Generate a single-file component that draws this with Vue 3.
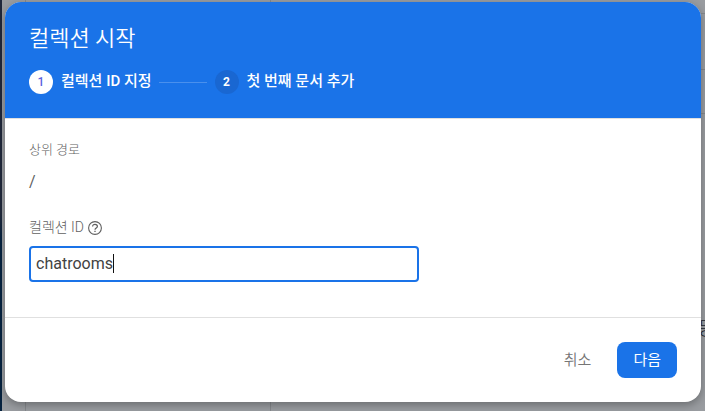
<script setup>
import { ref } from 'vue'

const steps = ['컬렉션 ID 지정', '첫 번째 문서 추가']
const current = ref(0)
const collectionId = ref('chatrooms')
</script>

<template>
  <div class="page">
    <div class="backdrop" aria-hidden="true">
      <div class="rail"></div>
      <div class="panel"></div>
      <div class="panel wide"></div>
      <div class="side">
        <div class="side-row"></div>
        <div class="side-row"></div>
        <div class="side-row"></div>
        <span class="side-text">등</span>
      </div>
    </div>

    <form class="dialog" role="dialog" aria-labelledby="dialog-title" @submit.prevent="current = 1">
      <header class="head">
        <h1 id="dialog-title" class="title">컬렉션 시작</h1>
        <ol class="steps">
          <li v-for="(step, i) in steps" :key="step" class="step">
            <span class="badge" :class="{ active: i === current }">{{ i + 1 }}</span>
            <span class="step-label">{{ step }}</span>
          </li>
        </ol>
      </header>

      <main class="body">
        <div class="label">상위 경로</div>
        <div class="path">/</div>
        <div class="label id-label">
          <label for="collection-id">컬렉션 ID</label>
          <svg class="help" viewBox="0 0 14 14" fill="none" stroke="currentColor" aria-hidden="true">
            <circle cx="7" cy="7" r="6.4" stroke-width="1.1" />
            <path d="M4.6 5.5c0-1.3 1-2.2 2.4-2.2s2.4.9 2.4 2.1c0 1.6-2.4 1.7-2.4 3.4" stroke-width="1.2" />
            <path d="M7 9.8v1.3" stroke-width="1.3" />
          </svg>
        </div>
        <div class="field">
          <input id="collection-id" v-model="collectionId" class="input" type="text" autocomplete="off" spellcheck="false" />
          <span class="caret" aria-hidden="true">{{ collectionId }}</span>
        </div>
      </main>

      <footer class="foot">
        <button type="button" class="btn cancel">취소</button>
        <button type="submit" class="btn next">다음</button>
      </footer>
    </form>
  </div>
</template>

<style>
body {
  margin: 0;
}
</style>

<style scoped>
.page {
  position: relative;
  box-sizing: border-box;
  min-height: 100vh;
  padding: 2px 4px 9px 5px;
  overflow: hidden;
  font-family: Roboto, 'Noto Sans CJK KR', sans-serif;
  background: #999ca0;
}

.backdrop {
  position: absolute;
  inset: 0;
  display: flex;
}

.rail {
  width: 2px;
  background: linear-gradient(#20283a 0 52%, #06223f 58%);
}

.panel {
  box-sizing: border-box;
  width: 24px;
  border-right: 1px solid #85888c;
}

.panel.wide {
  width: 245px;
}

.side {
  width: 7px;
  margin-left: auto;
  overflow: hidden;
}

.side-row {
  box-sizing: border-box;
  height: 56px;
  border-bottom: 1px solid #85888c;
}

.side-row:first-child {
  height: 14px;
}

.side-row:nth-child(3) {
  height: 44px;
}

.side-text {
  display: block;
  margin-top: 205px;
  font-size: 18px;
  font-weight: 300;
  line-height: 20px;
  color: #202530;
}

.dialog {
  position: relative;
  border-radius: 16px;
  overflow: hidden;
  background: #fff;
  box-shadow: 0 3px 8px rgba(0, 0, 0, 0.3);
}

.head {
  box-sizing: border-box;
  padding: 21px 24px 24px;
  border-bottom: 1px solid #e0e0e0;
  color: #fff;
  background: #1a73e8;
}

.title {
  margin: 0;
  font-size: 22px;
  font-weight: 350;
  line-height: 32px;
}

.steps {
  display: flex;
  align-items: center;
  margin: 15px 0 0;
  padding: 0;
  list-style: none;
}

.step {
  display: flex;
  align-items: center;
  gap: 8px;
}

.step + .step::before {
  content: '';
  width: 48px;
  height: 1px;
  margin-left: 7px;
  background: #4a90ed;
}

.badge {
  display: grid;
  place-items: center;
  width: 24px;
  height: 24px;
  border-radius: 50%;
  font-size: 12px;
  font-weight: 700;
  background: #1967d2;
}

.badge.active {
  font-weight: 500;
  color: #5b62de;
  background: #fff;
}

.step-label {
  padding-bottom: 2px;
  font-size: 15px;
  font-weight: 500;
  line-height: 22px;
}

.body {
  padding: 21px 24px 35px;
}

.label {
  font-size: 13px;
  font-weight: 300;
  line-height: 20px;
  color: #616161;
}

.path {
  margin: 11px 0 24px;
  font-size: 16px;
  line-height: 22px;
  color: #5f5f5f;
}

.id-label {
  display: flex;
  align-items: center;
  gap: 4px;
  font-size: 14px;
}

.help {
  width: 14px;
  height: 14px;
  padding-top: 2px;
  color: #5f5f5f;
}

.field {
  position: relative;
  max-width: 390px;
  margin-top: 9px;
}

.input {
  display: block;
  box-sizing: border-box;
  width: 100%;
  height: 36px;
  padding: 0 5px 2px;
  border: 2px solid #1a73e8;
  border-radius: 4px;
  outline: none;
  font: inherit;
  font-size: 16px;
  color: #424242;
  caret-color: #111;
  background: #fff;
}

.caret {
  position: absolute;
  top: 8px;
  left: 7px;
  border-right: 1px solid #111;
  font-size: 16px;
  line-height: 19px;
  color: transparent;
  pointer-events: none;
}

.input:focus + .caret {
  display: none;
}

.foot {
  display: flex;
  justify-content: flex-end;
  gap: 10px;
  padding: 24px;
  border-top: 1px solid #e0e0e0;
}

.btn {
  height: 36px;
  padding: 0 16px 4px;
  border: 0;
  border-radius: 8px;
  font: inherit;
  font-size: 15px;
  font-weight: 400;
  cursor: pointer;
}

.cancel {
  font-weight: 350;
  color: #757575;
  background: transparent;
}

.next {
  color: #fff;
  background: #1a73e8;
}
</style>
